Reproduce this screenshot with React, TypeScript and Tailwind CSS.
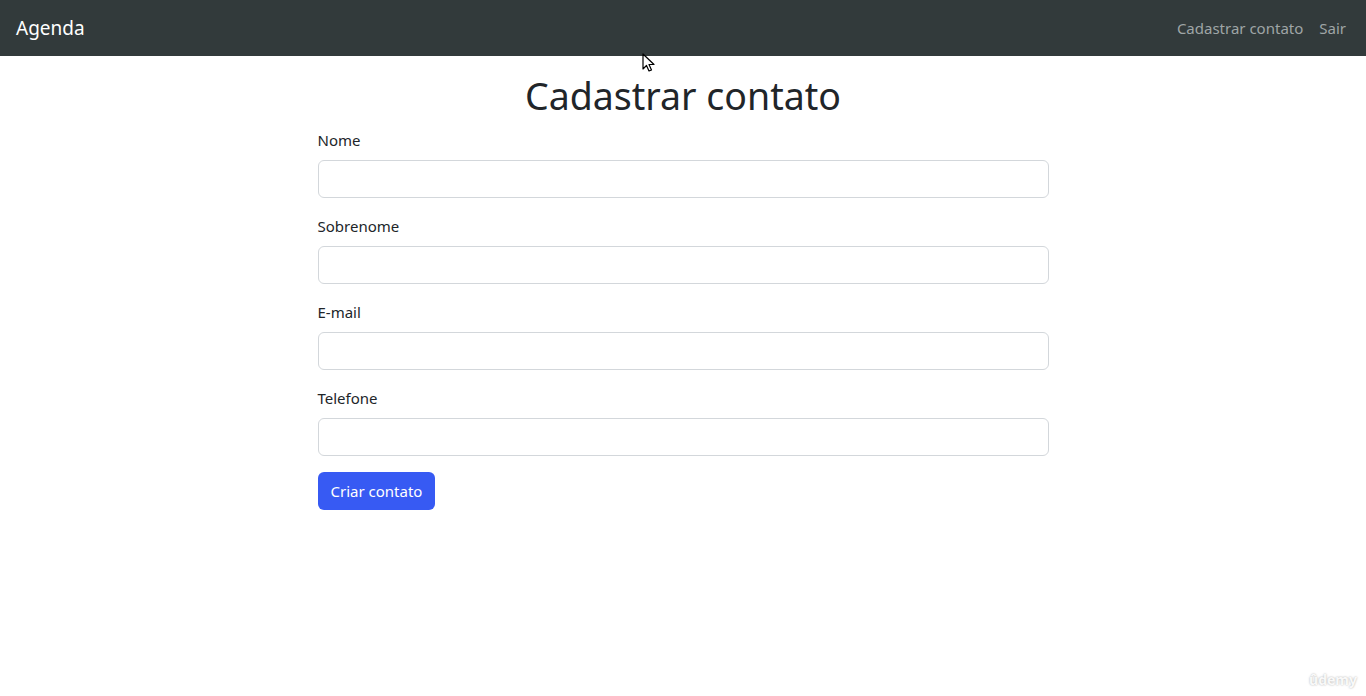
export default function App() {
  const fields = ['Nome', 'Sobrenome', 'E-mail', 'Telefone'];

  return (
    <div className="relative min-h-[696px] bg-white text-[#212529]" style={{ fontFamily: '"Noto Sans", "Open Sans", sans-serif' }}>
      {/* Navbar */}
      <nav className="h-14 bg-[#323a3b] flex items-center justify-between px-4">
        <span className="text-white text-[19px] leading-none">Agenda</span>
        <div className="flex items-center gap-4 text-[15px] text-[#9fa5a6]">
          <span>Cadastrar contato</span>
          <span className="mr-[4px]">Sair</span>
        </div>
      </nav>

      {/* Form */}
      <div className="w-[731px] mx-auto pt-4">
        <h1 className="text-center text-[37.5px] leading-[48px] mb-2">Cadastrar contato</h1>
        <form>
          {fields.map((f) => (
            <div key={f} className="mb-4">
              <label className="block text-[15px] leading-6 mb-2">{f}</label>
              <input className="block w-full h-[38px] border border-[#d3d7db] rounded-md bg-white" />
            </div>
          ))}
          <button type="button" className="h-[38px] px-[13px] rounded-md bg-[#375af3] text-white text-[15px]">
            Criar contato
          </button>
        </form>
      </div>

      {/* Mouse cursor */}
      <svg className="absolute left-[642px] top-[53px]" width="14" height="20" viewBox="0 0 14 20">
        <path d="M1 1 L1 16 L4.5 12.5 L7 18 L9.5 17 L7 11.5 L12 11.5 Z" fill="white" stroke="black" strokeWidth="1.2" strokeLinejoin="round" />
      </svg>

      {/* Watermark */}
      <span className="absolute right-[9px] bottom-[6px] text-[14px] font-bold text-white/90 [text-shadow:0_0_2px_rgba(0,0,0,0.35)]">
        ûdemy
      </span>
    </div>
  );
}
